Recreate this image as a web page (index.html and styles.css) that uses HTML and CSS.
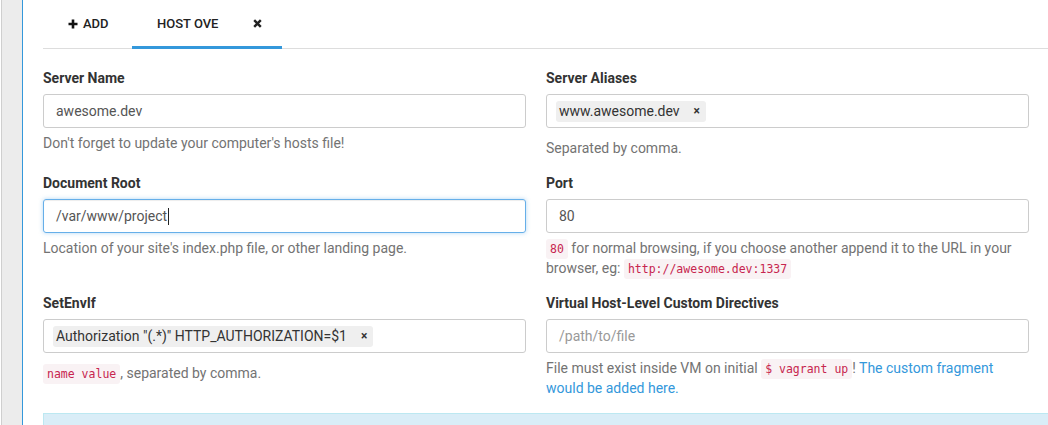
FILE: index.html
```html
<!DOCTYPE html>
<html lang="en">
<head>
<meta charset="utf-8">
<title>Host Overview</title>
<link rel="stylesheet" href="styles.css">
</head>
<body>
<div class="app">
  <aside class="sidebar"></aside>
  <main class="main">
    <nav class="tabs">
      <div class="tab tab-add">
        <svg class="ico-plus" width="10" height="10" viewBox="0 0 10 10"><path d="M5 0.5V9.5M0.5 5H9.5" stroke="#111" stroke-width="2.6" fill="none"/></svg>
        <span>ADD</span>
      </div>
      <div class="tab tab-active">
        <span class="tab-title">HOST OVE</span>
        <svg class="ico-close" width="9" height="9" viewBox="0 0 9 9"><path d="M1.2 1.2L7.8 7.8M7.8 1.2L1.2 7.8" stroke="#222" stroke-width="2.4" fill="none"/></svg>
      </div>
    </nav>

    <div class="form">
      <div class="group">
        <label class="label">Server Name</label>
        <div class="input">awesome.dev</div>
        <p class="help">Don't forget to update your computer's hosts file!</p>
      </div>
      <div class="group">
        <label class="label">Server Aliases</label>
        <div class="input tags"><span class="tag">www.awesome.dev<span class="tag-x">×</span></span></div>
        <p class="help">Separated by comma.</p>
      </div>

      <div class="group">
        <label class="label">Document Root</label>
        <div class="input focus">/var/www/project<span class="caret"></span></div>
        <p class="help">Location of your site's index.php file, or other landing page.</p>
      </div>
      <div class="group">
        <label class="label">Port</label>
        <div class="input">80</div>
        <p class="help"><code>80</code> for normal browsing, if you choose another append it to the URL in your browser, eg: <code>http://awesome.dev:1337</code></p>
      </div>

      <div class="group">
        <label class="label">SetEnvIf</label>
        <div class="input tags"><span class="tag">Authorization "(.*)" HTTP_AUTHORIZATION=$1<span class="tag-x">×</span></span></div>
        <p class="help"><code>name value</code>, separated by comma.</p>
      </div>
      <div class="group">
        <label class="label">Virtual Host-Level Custom Directives</label>
        <div class="input placeholder">/path/to/file</div>
        <p class="help">File must exist inside VM on initial <code>$ vagrant up</code>! <a class="link" href="#">The custom fragment would be added here.</a></p>
      </div>
    </div>

    <div class="alert"></div>
  </main>
</div>
</body>
</html>
```

FILE: styles.css
```css
* { box-sizing: border-box; }

html, body {
  margin: 0;
  padding: 0;
  height: 425px;
  overflow: hidden;
  background: #fff;
}

body {
  font-family: Roboto, "Liberation Sans", Arial, sans-serif;
  font-size: 14px;
  line-height: 20px;
  color: #333;
}

.app {
  display: flex;
  height: 425px;
  overflow: hidden;
}

.sidebar {
  width: 21px;
  margin-left: 1px;
  flex: none;
  background: #ececec;
  border-left: 1px solid #cfcfcf;
}

.main {
  flex: 1;
  border-left: 1px solid #3498db;
  padding-left: 20px;
}

/* tabs */
.tabs {
  display: flex;
  height: 49px;
  border-bottom: 1px solid #ddd;
}

.tab {
  display: flex;
  align-items: center;
  height: 49px;
  font-size: 13px;
  font-weight: 500;
  color: #222;
  text-transform: uppercase;
}

.tab-add {
  width: 89px;
  padding-left: 25px;
  gap: 5px;
  padding-bottom: 2px;
}

.tab-active {
  width: 150px;
  padding: 1px 20px 0 25px;
  border-bottom: 3px solid #3498db;
  margin-bottom: -1px;
}

.tab-title { flex: 1; }

/* form */
.form {
  display: grid;
  grid-template-columns: 1fr 1fr;
  column-gap: 20px;
  padding-top: 19px;
  padding-right: 19px;
}

.group {
  padding-bottom: 15px;
}

.label {
  display: block;
  font-weight: 700;
  margin-bottom: 6px;
  color: #333;
}

.input {
  height: 34px;
  border: 1px solid #ccc;
  border-radius: 3px;
  padding: 6px 12px;
  color: #555;
  font-size: 14px;
  line-height: 20px;
  display: flex;
  align-items: center;
}

.input.focus {
  border-color: #66afe9;
  box-shadow: inset 0 1px 1px rgba(0,0,0,.075), 0 0 4px rgba(102,175,233,.5);
}

.caret {
  display: inline-block;
  width: 1px;
  height: 17px;
  background: #222;
  margin-left: 1px;
}

.input.placeholder { color: #999; }

.input.tags {
  padding: 5px 9px;
}

.tag {
  display: inline-flex;
  align-items: center;
  height: 21px;
  line-height: 21px;
  background: #efefef;
  border-radius: 3px;
  padding: 0 6px 0 3px;
  color: #333;
}

.tag-x {
  font-size: 12px;
  font-weight: 700;
  margin-left: 14px;
  color: #333;
}

.help {
  margin: 5px 0 0;
  color: #737373;
}

.tags + .help {
  margin-top: 10px;
}

code {
  font-family: "DejaVu Sans Mono", "Liberation Mono", monospace;
  font-size: 11.5px;
  line-height: 16px;
  padding: 3px 4px;
  color: #c7254e;
  background: #f9f2f4;
  border-radius: 3px;
}

.link {
  color: #3498db;
  text-decoration: none;
}

.alert {
  height: 60px;
  background: #d9edf7;
  border: 1px solid #bce8f1;
  border-right: none;
  border-bottom: none;
}
```
